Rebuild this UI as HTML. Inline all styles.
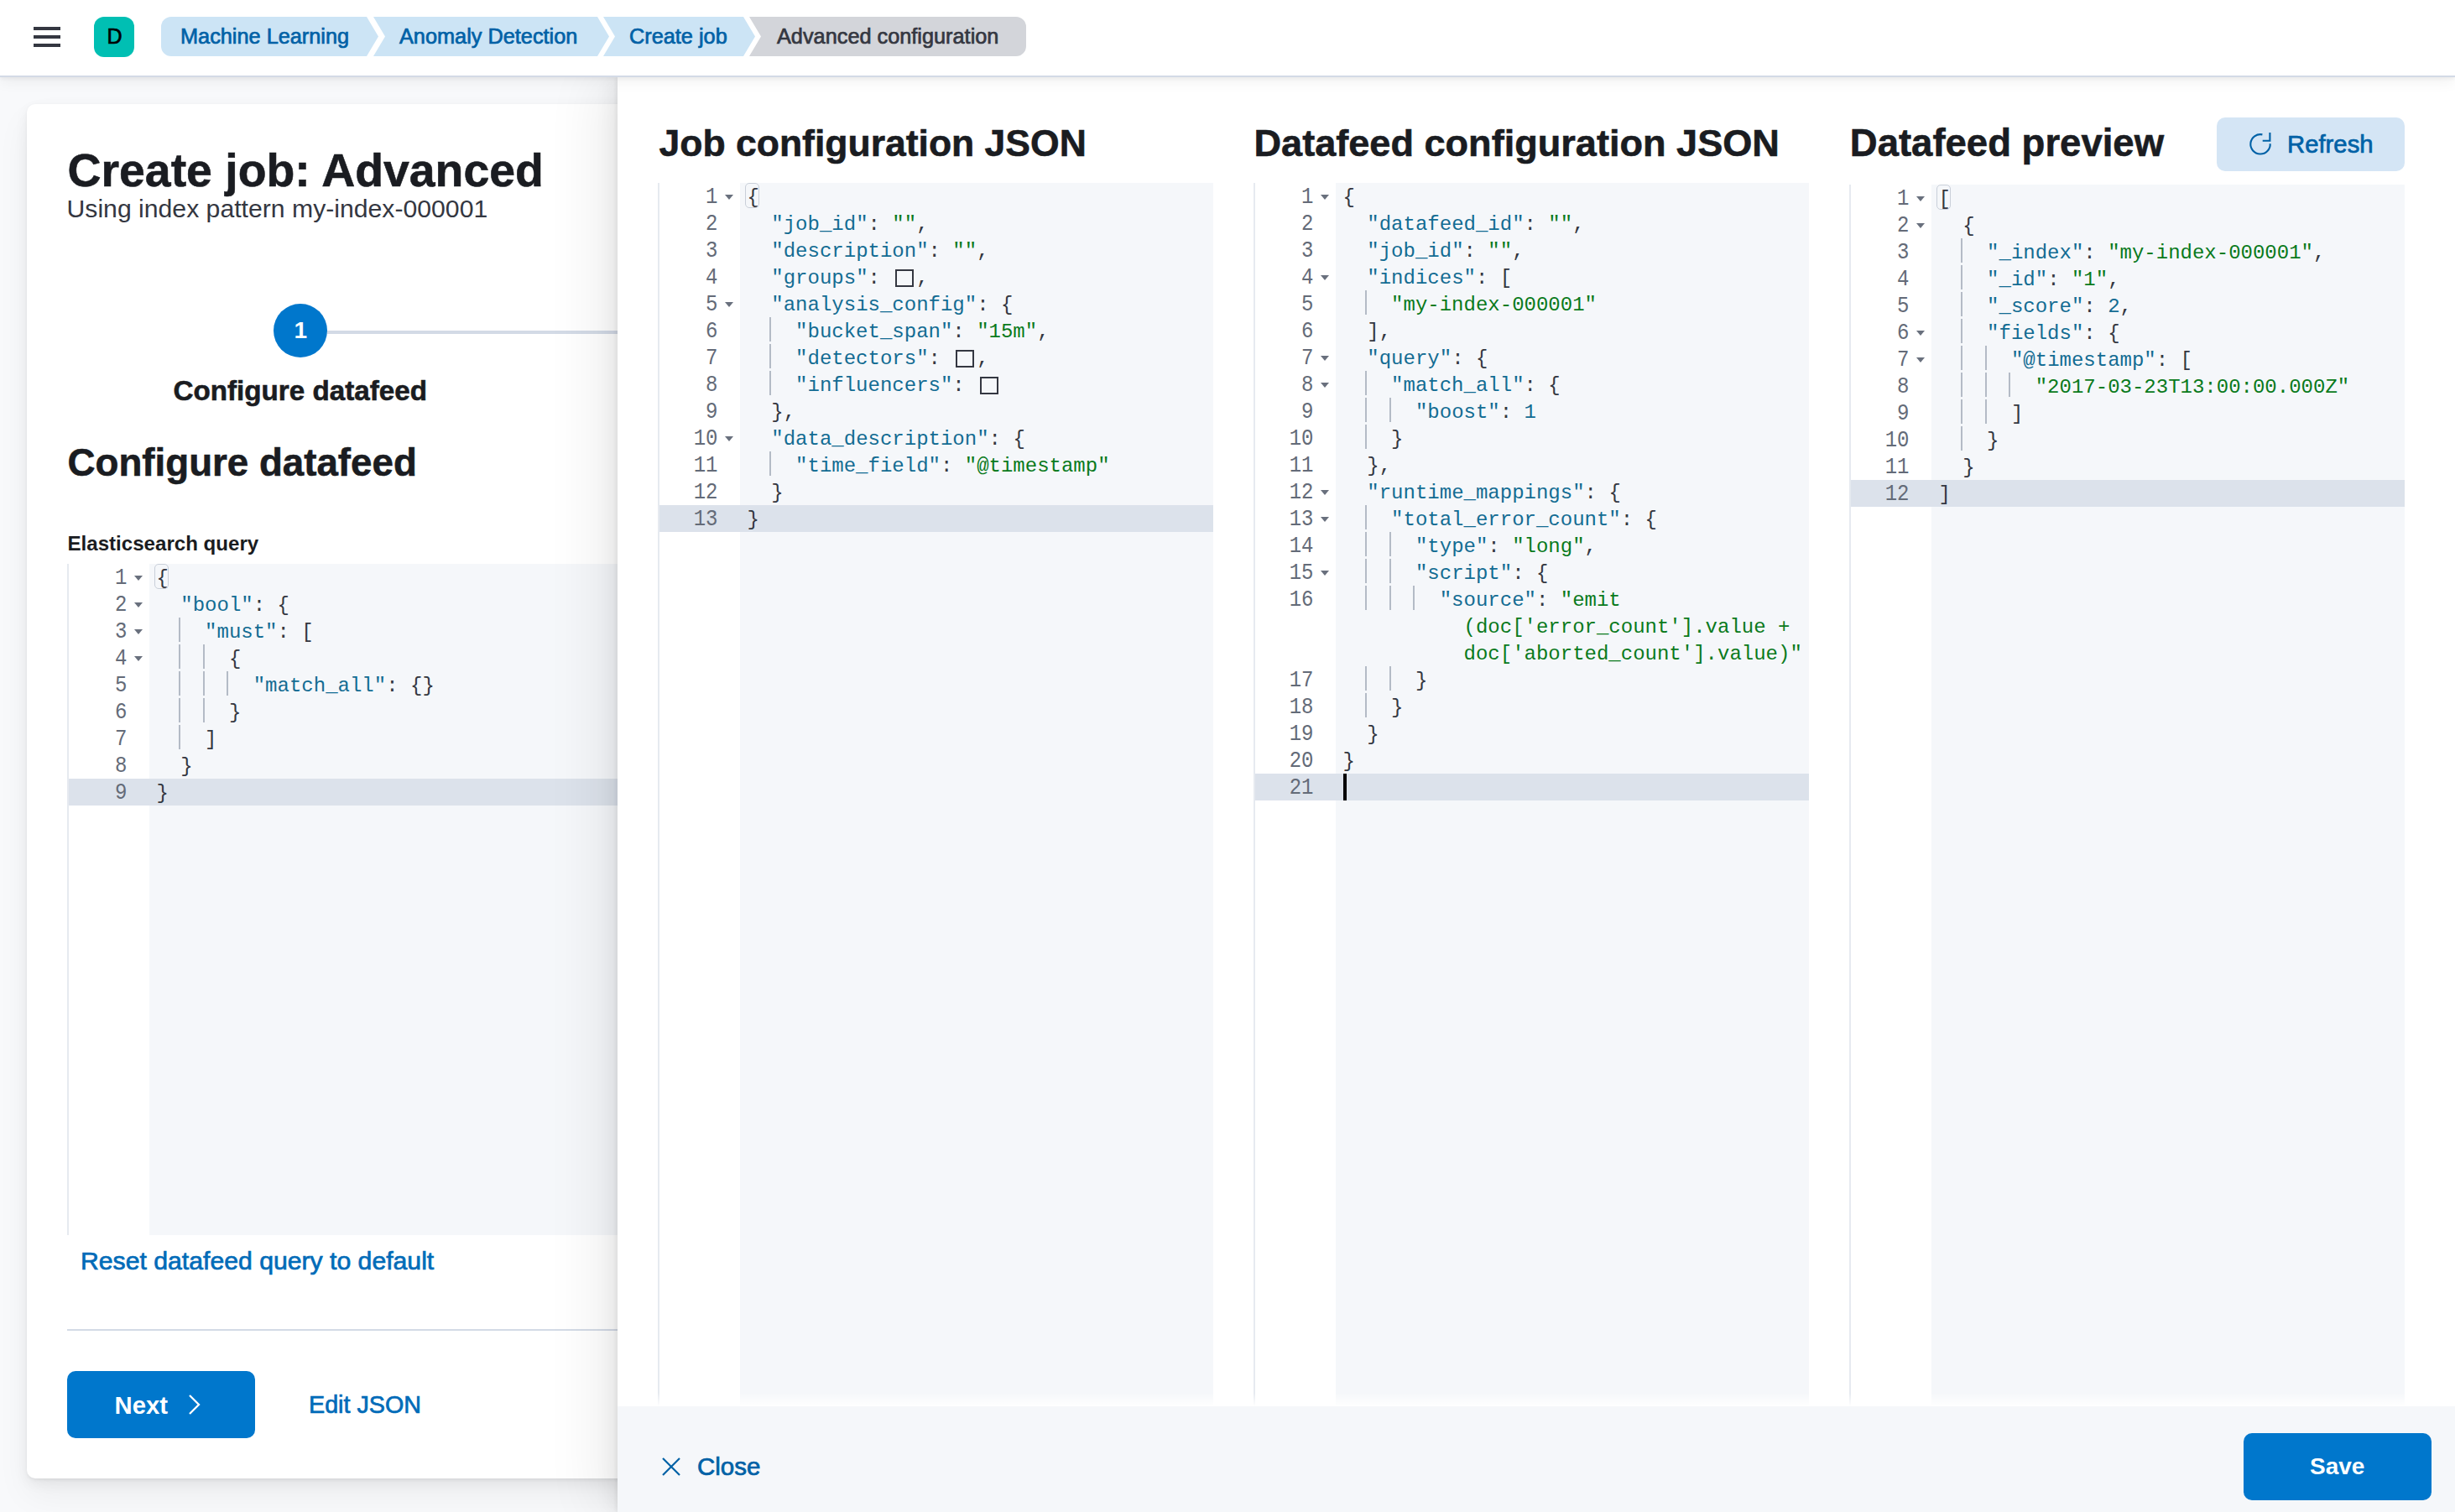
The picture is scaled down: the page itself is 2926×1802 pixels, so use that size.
<!DOCTYPE html>
<html><head><meta charset="utf-8"><title>Create job: Advanced</title>
<style>
*{box-sizing:border-box;margin:0;padding:0}
html,body{width:2926px;height:1802px;overflow:hidden;background:#F8F9FB;font-family:"Liberation Sans", sans-serif;}
.t{position:absolute;white-space:nowrap;line-height:1;}
.hdr{position:absolute;left:0;top:0;width:2926px;height:92px;background:#fff;border-bottom:2px solid #D3DAE6;box-shadow:0 2px 4px rgba(0,0,0,.05),0 6px 16px rgba(0,0,0,.05);z-index:5}
.bar{position:absolute;left:40px;width:32px;height:3.6px;background:#343741}
.crumb{position:absolute;top:20px;height:47px;}
.card{position:absolute;left:32px;top:124px;width:2860px;height:1638px;background:#fff;border-radius:10px;box-shadow:0 1.8px 3.6px rgba(0,0,0,.05),0 6px 16px rgba(0,0,0,.06),0 20px 40px rgba(0,0,0,.05)}
.fly{position:absolute;left:736px;top:92px;width:2190px;height:1710px;background:#fff;box-shadow:-2px 0 4px rgba(0,0,0,.05),-8px 0 20px rgba(0,0,0,.05),-24px 0 60px rgba(0,0,0,.07);z-index:3}
.ed{position:absolute;background:#F5F7FA;border-left:2px solid #E6EAF0;overflow:hidden;font-family:"Liberation Mono", monospace;font-size:24px;}
.gut{position:absolute;left:0;top:0;bottom:0;background:#FFFFFF}
.act{position:absolute;left:0;right:0;height:32px;background:#DCE2EB}
.ln{position:absolute;line-height:32px;color:#646B78;white-space:pre;text-align:right;transform:scaleY(1.14);transform-origin:0 23px}
.fold{position:absolute;width:0;height:0;border-left:5px solid transparent;border-right:5px solid transparent;border-top:6px solid #69707D}
.ig{position:absolute;width:2px;height:29px;background:#B4BBC6}
.code{position:absolute;line-height:32px;white-space:pre;color:#343741}
.brk{position:absolute;width:17px;height:30px;border:1.5px solid #C9CFD9;border-radius:5px}
.bx{position:relative;color:transparent}
.bx:after{content:'';position:absolute;left:4px;top:2.5px;width:21.5px;height:21.5px;border:2.4px solid #343741;box-sizing:border-box}
.cur{position:absolute;width:4px;height:32px;background:#000}
.btn{position:absolute;border-radius:10px}
</style></head>
<body>
<div class="hdr">
<div class="bar" style="top:32px"></div>
<div class="bar" style="top:42px"></div>
<div class="bar" style="top:52px"></div>
<div style="position:absolute;left:112px;top:20px;width:48px;height:48px;border-radius:12px;background:#00BFB3"></div>
<div class="t" style="left:127.5px;top:30.54px;font-size:25px;color:#000;font-weight:400;-webkit-text-stroke:0.7px currentColor;">D</div>
<svg style="position:absolute;left:0;top:0" width="1300" height="92">
<path d="M204,20 H437 L451,43.5 L437,67 H204 A12,12 0 0 1 192,55 V32 A12,12 0 0 1 204,20 Z" fill="#CCE4F5"/>
<path d="M445,20 H712 L726,43.5 L712,67 H445 L459,43.5 Z" fill="#CCE4F5"/>
<path d="M719,20 H886 L900,43.5 L886,67 H719 L733,43.5 Z" fill="#CCE4F5"/>
<path d="M893,20 H1211 A12,12 0 0 1 1223,32 V55 A12,12 0 0 1 1211,67 H893 L907,43.5 Z" fill="#D3D5DA"/>
</svg>
<div class="t" style="left:215px;top:30.58px;font-size:25.3px;color:#0061A6;font-weight:400;-webkit-text-stroke:0.7px currentColor;">Machine Learning</div>
<div class="t" style="left:476px;top:30.58px;font-size:25.3px;color:#0061A6;font-weight:400;-webkit-text-stroke:0.7px currentColor;">Anomaly Detection</div>
<div class="t" style="left:750px;top:30.58px;font-size:25.3px;color:#0061A6;font-weight:400;-webkit-text-stroke:0.7px currentColor;">Create job</div>
<div class="t" style="left:926px;top:30.58px;font-size:25.3px;color:#343741;font-weight:400;-webkit-text-stroke:0.7px currentColor;">Advanced configuration</div>
</div>
<div class="card"></div>
<div class="t" style="left:80.5px;top:175.60px;font-size:55.4px;color:#1A1C21;font-weight:700;-webkit-text-stroke:0.6px currentColor;">Create job: Advanced</div>
<div class="t" style="left:79.5px;top:234.44px;font-size:30.2px;color:#343741;font-weight:400;">Using index pattern my-index-000001</div>
<div style="position:absolute;left:390px;top:394px;width:400px;height:4px;background:#D3DAE6"></div>
<div style="position:absolute;left:326px;top:362px;width:64px;height:64px;border-radius:50%;background:#0077CC"></div>
<div class="t" style="left:350.5px;top:380.30px;font-size:28px;color:#fff;font-weight:700;">1</div>
<div class="t" style="left:206.5px;top:449.40px;font-size:33.2px;color:#1A1C21;font-weight:700;-webkit-text-stroke:0.6px currentColor;">Configure datafeed</div>
<div class="t" style="left:80.5px;top:529.31px;font-size:45.7px;color:#1A1C21;font-weight:700;-webkit-text-stroke:0.6px currentColor;">Configure datafeed</div>
<div class="t" style="left:80.5px;top:635.60px;font-size:24.1px;color:#1A1C21;font-weight:700;">Elasticsearch query</div>
<div class="ed" style="left:80px;top:672px;width:900px;height:800px;">
<div class="gut" style="width:96px;"></div>
<div class="act" style="top:256px;"></div>
<div class="ln" style="top:1.8px;right:828.5px;">1</div>
<div class="fold" style="top:14px;left:77.5px;"></div>
<div class="code" style="top:2.2px;left:104.5px;"><span style="color:#343741">{</span></div>
<div class="ln" style="top:33.8px;right:828.5px;">2</div>
<div class="fold" style="top:46px;left:77.5px;"></div>
<div class="code" style="top:34.2px;left:104.5px;">  <span style="color:#136C93">&quot;bool&quot;</span><span style="color:#343741">:</span> <span style="color:#343741">{</span></div>
<div class="ln" style="top:65.8px;right:828.5px;">3</div>
<div class="fold" style="top:78px;left:77.5px;"></div>
<div class="ig" style="left:130.8px;top:64px;"></div>
<div class="code" style="top:66.2px;left:104.5px;">    <span style="color:#136C93">&quot;must&quot;</span><span style="color:#343741">:</span> <span style="color:#343741">[</span></div>
<div class="ln" style="top:97.8px;right:828.5px;">4</div>
<div class="fold" style="top:110px;left:77.5px;"></div>
<div class="ig" style="left:130.8px;top:96px;"></div>
<div class="ig" style="left:159.6px;top:96px;"></div>
<div class="code" style="top:98.2px;left:104.5px;">      <span style="color:#343741">{</span></div>
<div class="ln" style="top:129.8px;right:828.5px;">5</div>
<div class="ig" style="left:130.8px;top:128px;"></div>
<div class="ig" style="left:159.6px;top:128px;"></div>
<div class="ig" style="left:188.4px;top:128px;"></div>
<div class="code" style="top:130.2px;left:104.5px;">        <span style="color:#136C93">&quot;match_all&quot;</span><span style="color:#343741">:</span> <span style="color:#343741">{</span><span style="color:#343741">}</span></div>
<div class="ln" style="top:161.8px;right:828.5px;">6</div>
<div class="ig" style="left:130.8px;top:160px;"></div>
<div class="ig" style="left:159.6px;top:160px;"></div>
<div class="code" style="top:162.2px;left:104.5px;">      <span style="color:#343741">}</span></div>
<div class="ln" style="top:193.8px;right:828.5px;">7</div>
<div class="ig" style="left:130.8px;top:192px;"></div>
<div class="code" style="top:194.2px;left:104.5px;">    <span style="color:#343741">]</span></div>
<div class="ln" style="top:225.8px;right:828.5px;">8</div>
<div class="code" style="top:226.2px;left:104.5px;">  <span style="color:#343741">}</span></div>
<div class="ln" style="top:257.8px;right:828.5px;">9</div>
<div class="code" style="top:258.2px;left:104.5px;"><span style="color:#343741">}</span></div>
<div class="brk" style="top:0px;left:101.5px;"></div>
</div>
<div class="t" style="left:96px;top:1487.94px;font-size:30.2px;color:#006BB8;font-weight:400;-webkit-text-stroke:0.7px currentColor;">Reset datafeed query to default</div>
<div style="position:absolute;left:80px;top:1584px;width:700px;height:2px;background:#D3DAE6"></div>
<div class="btn" style="left:80px;top:1634px;width:224px;height:80px;background:#0077CC"></div>
<div class="t" style="left:136.5px;top:1659.70px;font-size:29.3px;color:#fff;font-weight:700;">Next</div>
<svg style="position:absolute;left:222px;top:1660px" width="20" height="28"><path d="M4,3 L15,14 L4,25" fill="none" stroke="#fff" stroke-width="2.3"/></svg>
<div class="t" style="left:368px;top:1659.71px;font-size:28.7px;color:#006BB8;font-weight:400;-webkit-text-stroke:0.7px currentColor;">Edit JSON</div>
<div class="fly">
<div class="t" style="left:49.5px;top:56.83px;font-size:44.5px;color:#1A1C21;font-weight:700;-webkit-text-stroke:0.6px currentColor;">Job configuration JSON</div>
<div class="t" style="left:758.5px;top:56.32px;font-size:45.1px;color:#1A1C21;font-weight:700;-webkit-text-stroke:0.6px currentColor;">Datafeed configuration JSON</div>
<div class="t" style="left:1468.8000000000002px;top:55.98px;font-size:45.5px;color:#1A1C21;font-weight:700;-webkit-text-stroke:0.6px currentColor;">Datafeed preview</div>
<div class="btn" style="left:1906px;top:48px;width:224px;height:64px;background:#D4E5F5"></div>
<svg style="position:absolute;left:1944px;top:63px" width="32" height="32"><path d="M16.4,5.4 A11.7,11.7 0 1 0 25.7,16.2" fill="none" stroke="#0061A6" stroke-width="2.1"/><path d="M25.4,3 V12.7 H16.7" fill="none" stroke="#0061A6" stroke-width="2.1"/></svg>
<div class="t" style="left:1990px;top:65.20px;font-size:29.3px;color:#0061A6;font-weight:400;-webkit-text-stroke:0.7px currentColor;">Refresh</div>
<div class="ed" style="left:48px;top:126px;width:662px;height:1458px;">
<div class="gut" style="width:96px;"></div>
<div class="act" style="top:384px;"></div>
<div class="ln" style="top:1.8px;right:590.5px;">1</div>
<div class="fold" style="top:14px;left:77.5px;"></div>
<div class="code" style="top:2.2px;left:104.5px;"><span style="color:#343741">{</span></div>
<div class="ln" style="top:33.8px;right:590.5px;">2</div>
<div class="code" style="top:34.2px;left:104.5px;">  <span style="color:#136C93">&quot;job_id&quot;</span><span style="color:#343741">:</span> <span style="color:#0A7A1C">&quot;&quot;</span><span style="color:#343741">,</span></div>
<div class="ln" style="top:65.8px;right:590.5px;">3</div>
<div class="code" style="top:66.2px;left:104.5px;">  <span style="color:#136C93">&quot;description&quot;</span><span style="color:#343741">:</span> <span style="color:#0A7A1C">&quot;&quot;</span><span style="color:#343741">,</span></div>
<div class="ln" style="top:97.8px;right:590.5px;">4</div>
<div class="code" style="top:98.2px;left:104.5px;">  <span style="color:#136C93">&quot;groups&quot;</span><span style="color:#343741">:</span> <span class="bx">[]</span><span style="color:#343741">,</span></div>
<div class="ln" style="top:129.8px;right:590.5px;">5</div>
<div class="fold" style="top:142px;left:77.5px;"></div>
<div class="code" style="top:130.2px;left:104.5px;">  <span style="color:#136C93">&quot;analysis_config&quot;</span><span style="color:#343741">:</span> <span style="color:#343741">{</span></div>
<div class="ln" style="top:161.8px;right:590.5px;">6</div>
<div class="ig" style="left:130.8px;top:160px;"></div>
<div class="code" style="top:162.2px;left:104.5px;">    <span style="color:#136C93">&quot;bucket_span&quot;</span><span style="color:#343741">:</span> <span style="color:#0A7A1C">&quot;15m&quot;</span><span style="color:#343741">,</span></div>
<div class="ln" style="top:193.8px;right:590.5px;">7</div>
<div class="ig" style="left:130.8px;top:192px;"></div>
<div class="code" style="top:194.2px;left:104.5px;">    <span style="color:#136C93">&quot;detectors&quot;</span><span style="color:#343741">:</span> <span class="bx">[]</span><span style="color:#343741">,</span></div>
<div class="ln" style="top:225.8px;right:590.5px;">8</div>
<div class="ig" style="left:130.8px;top:224px;"></div>
<div class="code" style="top:226.2px;left:104.5px;">    <span style="color:#136C93">&quot;influencers&quot;</span><span style="color:#343741">:</span> <span class="bx">[]</span></div>
<div class="ln" style="top:257.8px;right:590.5px;">9</div>
<div class="code" style="top:258.2px;left:104.5px;">  <span style="color:#343741">}</span><span style="color:#343741">,</span></div>
<div class="ln" style="top:289.8px;right:590.5px;">10</div>
<div class="fold" style="top:302px;left:77.5px;"></div>
<div class="code" style="top:290.2px;left:104.5px;">  <span style="color:#136C93">&quot;data_description&quot;</span><span style="color:#343741">:</span> <span style="color:#343741">{</span></div>
<div class="ln" style="top:321.8px;right:590.5px;">11</div>
<div class="ig" style="left:130.8px;top:320px;"></div>
<div class="code" style="top:322.2px;left:104.5px;">    <span style="color:#136C93">&quot;time_field&quot;</span><span style="color:#343741">:</span> <span style="color:#0A7A1C">&quot;@timestamp&quot;</span></div>
<div class="ln" style="top:353.8px;right:590.5px;">12</div>
<div class="code" style="top:354.2px;left:104.5px;">  <span style="color:#343741">}</span></div>
<div class="ln" style="top:385.8px;right:590.5px;">13</div>
<div class="code" style="top:386.2px;left:104.5px;"><span style="color:#343741">}</span></div>
<div class="brk" style="top:0px;left:101.5px;"></div>
</div>
<div class="ed" style="left:758px;top:126px;width:662px;height:1458px;">
<div class="gut" style="width:96px;"></div>
<div class="act" style="top:704px;"></div>
<div class="ln" style="top:1.8px;right:590.5px;">1</div>
<div class="fold" style="top:14px;left:77.5px;"></div>
<div class="code" style="top:2.2px;left:104.5px;"><span style="color:#343741">{</span></div>
<div class="ln" style="top:33.8px;right:590.5px;">2</div>
<div class="code" style="top:34.2px;left:104.5px;">  <span style="color:#136C93">&quot;datafeed_id&quot;</span><span style="color:#343741">:</span> <span style="color:#0A7A1C">&quot;&quot;</span><span style="color:#343741">,</span></div>
<div class="ln" style="top:65.8px;right:590.5px;">3</div>
<div class="code" style="top:66.2px;left:104.5px;">  <span style="color:#136C93">&quot;job_id&quot;</span><span style="color:#343741">:</span> <span style="color:#0A7A1C">&quot;&quot;</span><span style="color:#343741">,</span></div>
<div class="ln" style="top:97.8px;right:590.5px;">4</div>
<div class="fold" style="top:110px;left:77.5px;"></div>
<div class="code" style="top:98.2px;left:104.5px;">  <span style="color:#136C93">&quot;indices&quot;</span><span style="color:#343741">:</span> <span style="color:#343741">[</span></div>
<div class="ln" style="top:129.8px;right:590.5px;">5</div>
<div class="ig" style="left:130.8px;top:128px;"></div>
<div class="code" style="top:130.2px;left:104.5px;">    <span style="color:#0A7A1C">&quot;my-index-000001&quot;</span></div>
<div class="ln" style="top:161.8px;right:590.5px;">6</div>
<div class="code" style="top:162.2px;left:104.5px;">  <span style="color:#343741">]</span><span style="color:#343741">,</span></div>
<div class="ln" style="top:193.8px;right:590.5px;">7</div>
<div class="fold" style="top:206px;left:77.5px;"></div>
<div class="code" style="top:194.2px;left:104.5px;">  <span style="color:#136C93">&quot;query&quot;</span><span style="color:#343741">:</span> <span style="color:#343741">{</span></div>
<div class="ln" style="top:225.8px;right:590.5px;">8</div>
<div class="fold" style="top:238px;left:77.5px;"></div>
<div class="ig" style="left:130.8px;top:224px;"></div>
<div class="code" style="top:226.2px;left:104.5px;">    <span style="color:#136C93">&quot;match_all&quot;</span><span style="color:#343741">:</span> <span style="color:#343741">{</span></div>
<div class="ln" style="top:257.8px;right:590.5px;">9</div>
<div class="ig" style="left:130.8px;top:256px;"></div>
<div class="ig" style="left:159.6px;top:256px;"></div>
<div class="code" style="top:258.2px;left:104.5px;">      <span style="color:#136C93">&quot;boost&quot;</span><span style="color:#343741">:</span> <span style="color:#136C93">1</span></div>
<div class="ln" style="top:289.8px;right:590.5px;">10</div>
<div class="ig" style="left:130.8px;top:288px;"></div>
<div class="code" style="top:290.2px;left:104.5px;">    <span style="color:#343741">}</span></div>
<div class="ln" style="top:321.8px;right:590.5px;">11</div>
<div class="code" style="top:322.2px;left:104.5px;">  <span style="color:#343741">}</span><span style="color:#343741">,</span></div>
<div class="ln" style="top:353.8px;right:590.5px;">12</div>
<div class="fold" style="top:366px;left:77.5px;"></div>
<div class="code" style="top:354.2px;left:104.5px;">  <span style="color:#136C93">&quot;runtime_mappings&quot;</span><span style="color:#343741">:</span> <span style="color:#343741">{</span></div>
<div class="ln" style="top:385.8px;right:590.5px;">13</div>
<div class="fold" style="top:398px;left:77.5px;"></div>
<div class="ig" style="left:130.8px;top:384px;"></div>
<div class="code" style="top:386.2px;left:104.5px;">    <span style="color:#136C93">&quot;total_error_count&quot;</span><span style="color:#343741">:</span> <span style="color:#343741">{</span></div>
<div class="ln" style="top:417.8px;right:590.5px;">14</div>
<div class="ig" style="left:130.8px;top:416px;"></div>
<div class="ig" style="left:159.6px;top:416px;"></div>
<div class="code" style="top:418.2px;left:104.5px;">      <span style="color:#136C93">&quot;type&quot;</span><span style="color:#343741">:</span> <span style="color:#0A7A1C">&quot;long&quot;</span><span style="color:#343741">,</span></div>
<div class="ln" style="top:449.8px;right:590.5px;">15</div>
<div class="fold" style="top:462px;left:77.5px;"></div>
<div class="ig" style="left:130.8px;top:448px;"></div>
<div class="ig" style="left:159.6px;top:448px;"></div>
<div class="code" style="top:450.2px;left:104.5px;">      <span style="color:#136C93">&quot;script&quot;</span><span style="color:#343741">:</span> <span style="color:#343741">{</span></div>
<div class="ln" style="top:481.8px;right:590.5px;">16</div>
<div class="ig" style="left:130.8px;top:480px;"></div>
<div class="ig" style="left:159.6px;top:480px;"></div>
<div class="ig" style="left:188.4px;top:480px;"></div>
<div class="code" style="top:482.2px;left:104.5px;">        <span style="color:#136C93">&quot;source&quot;</span><span style="color:#343741">:</span> <span style="color:#0A7A1C">&quot;emit</span></div>
<div class="code" style="top:514.2px;left:104.5px;"><span style="color:#0A7A1C">          (doc[&#x27;error_count&#x27;].value +</span></div>
<div class="code" style="top:546.2px;left:104.5px;"><span style="color:#0A7A1C">          doc[&#x27;aborted_count&#x27;].value)&quot;</span></div>
<div class="ln" style="top:577.8px;right:590.5px;">17</div>
<div class="ig" style="left:130.8px;top:576px;"></div>
<div class="ig" style="left:159.6px;top:576px;"></div>
<div class="code" style="top:578.2px;left:104.5px;">      <span style="color:#343741">}</span></div>
<div class="ln" style="top:609.8px;right:590.5px;">18</div>
<div class="ig" style="left:130.8px;top:608px;"></div>
<div class="code" style="top:610.2px;left:104.5px;">    <span style="color:#343741">}</span></div>
<div class="ln" style="top:641.8px;right:590.5px;">19</div>
<div class="code" style="top:642.2px;left:104.5px;">  <span style="color:#343741">}</span></div>
<div class="ln" style="top:673.8px;right:590.5px;">20</div>
<div class="code" style="top:674.2px;left:104.5px;"><span style="color:#343741">}</span></div>
<div class="ln" style="top:705.8px;right:590.5px;">21</div>
<div class="code" style="top:706.2px;left:104.5px;"></div>
<div class="cur" style="top:704px;left:105.0px;"></div>
</div>
<div class="ed" style="left:1468px;top:128px;width:662px;height:1456px;">
<div class="gut" style="width:96px;"></div>
<div class="act" style="top:352px;"></div>
<div class="ln" style="top:1.8px;right:590.5px;">1</div>
<div class="fold" style="top:14px;left:77.5px;"></div>
<div class="code" style="top:2.2px;left:104.5px;"><span style="color:#343741">[</span></div>
<div class="ln" style="top:33.8px;right:590.5px;">2</div>
<div class="fold" style="top:46px;left:77.5px;"></div>
<div class="code" style="top:34.2px;left:104.5px;">  <span style="color:#343741">{</span></div>
<div class="ln" style="top:65.8px;right:590.5px;">3</div>
<div class="ig" style="left:130.8px;top:64px;"></div>
<div class="code" style="top:66.2px;left:104.5px;">    <span style="color:#136C93">&quot;_index&quot;</span><span style="color:#343741">:</span> <span style="color:#0A7A1C">&quot;my-index-000001&quot;</span><span style="color:#343741">,</span></div>
<div class="ln" style="top:97.8px;right:590.5px;">4</div>
<div class="ig" style="left:130.8px;top:96px;"></div>
<div class="code" style="top:98.2px;left:104.5px;">    <span style="color:#136C93">&quot;_id&quot;</span><span style="color:#343741">:</span> <span style="color:#0A7A1C">&quot;1&quot;</span><span style="color:#343741">,</span></div>
<div class="ln" style="top:129.8px;right:590.5px;">5</div>
<div class="ig" style="left:130.8px;top:128px;"></div>
<div class="code" style="top:130.2px;left:104.5px;">    <span style="color:#136C93">&quot;_score&quot;</span><span style="color:#343741">:</span> <span style="color:#136C93">2</span><span style="color:#343741">,</span></div>
<div class="ln" style="top:161.8px;right:590.5px;">6</div>
<div class="fold" style="top:174px;left:77.5px;"></div>
<div class="ig" style="left:130.8px;top:160px;"></div>
<div class="code" style="top:162.2px;left:104.5px;">    <span style="color:#136C93">&quot;fields&quot;</span><span style="color:#343741">:</span> <span style="color:#343741">{</span></div>
<div class="ln" style="top:193.8px;right:590.5px;">7</div>
<div class="fold" style="top:206px;left:77.5px;"></div>
<div class="ig" style="left:130.8px;top:192px;"></div>
<div class="ig" style="left:159.6px;top:192px;"></div>
<div class="code" style="top:194.2px;left:104.5px;">      <span style="color:#136C93">&quot;@timestamp&quot;</span><span style="color:#343741">:</span> <span style="color:#343741">[</span></div>
<div class="ln" style="top:225.8px;right:590.5px;">8</div>
<div class="ig" style="left:130.8px;top:224px;"></div>
<div class="ig" style="left:159.6px;top:224px;"></div>
<div class="ig" style="left:188.4px;top:224px;"></div>
<div class="code" style="top:226.2px;left:104.5px;">        <span style="color:#0A7A1C">&quot;2017-03-23T13:00:00.000Z&quot;</span></div>
<div class="ln" style="top:257.8px;right:590.5px;">9</div>
<div class="ig" style="left:130.8px;top:256px;"></div>
<div class="ig" style="left:159.6px;top:256px;"></div>
<div class="code" style="top:258.2px;left:104.5px;">      <span style="color:#343741">]</span></div>
<div class="ln" style="top:289.8px;right:590.5px;">10</div>
<div class="ig" style="left:130.8px;top:288px;"></div>
<div class="code" style="top:290.2px;left:104.5px;">    <span style="color:#343741">}</span></div>
<div class="ln" style="top:321.8px;right:590.5px;">11</div>
<div class="code" style="top:322.2px;left:104.5px;">  <span style="color:#343741">}</span></div>
<div class="ln" style="top:353.8px;right:590.5px;">12</div>
<div class="code" style="top:354.2px;left:104.5px;"><span style="color:#343741">]</span></div>
<div class="brk" style="top:0px;left:101.5px;"></div>
</div>
<div style="position:absolute;left:0;top:1568px;width:2190px;height:16px;background:linear-gradient(rgba(255,255,255,0),#fff)"></div>
<div style="position:absolute;left:0;top:1584px;width:2190px;height:126px;background:#F5F7FA"></div>
<svg style="position:absolute;left:52px;top:1644px" width="24" height="24"><path d="M2,2 L22,22 M22,2 L2,22" fill="none" stroke="#0061A6" stroke-width="2.2"/></svg>
<div class="t" style="left:95px;top:1641.03px;font-size:29.5px;color:#0061A6;font-weight:400;-webkit-text-stroke:0.7px currentColor;">Close</div>
<div class="btn" style="left:1938px;top:1616px;width:224px;height:80px;background:#0077CC"></div>
<div class="t" style="left:2017px;top:1642.30px;font-size:28px;color:#fff;font-weight:700;">Save</div>
</div>
</body></html>
